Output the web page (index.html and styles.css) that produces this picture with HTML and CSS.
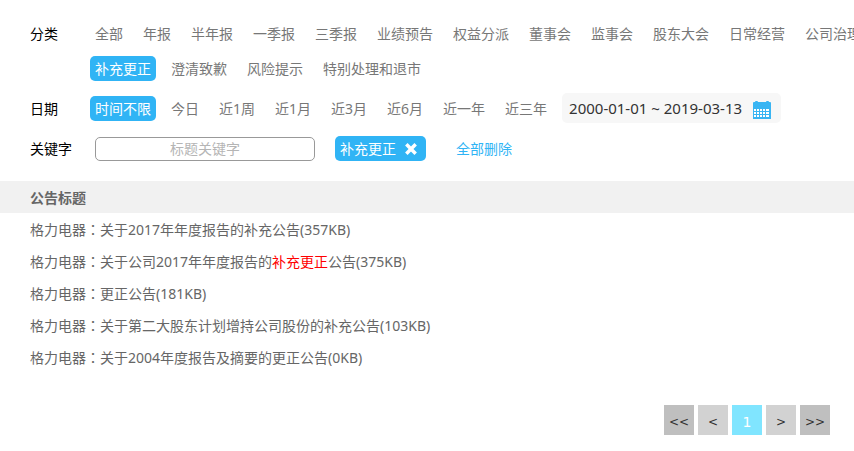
FILE: index.html
```html
<!DOCTYPE html>
<html lang="zh-CN">
<head>
<meta charset="utf-8">
<meta name="viewport" content="width=device-width, initial-scale=1">
<title>公告</title>
<link rel="stylesheet" href="styles.css">
</head>
<body>
<form class="filters">
  <div class="filter" role="group" aria-labelledby="category-label">
    <span class="filter-label" id="category-label">分类</span>
    <div class="options-stack">
      <div class="options">
        <button type="button" class="option">全部</button>
        <button type="button" class="option">年报</button>
        <button type="button" class="option">半年报</button>
        <button type="button" class="option">一季报</button>
        <button type="button" class="option">三季报</button>
        <button type="button" class="option">业绩预告</button>
        <button type="button" class="option">权益分派</button>
        <button type="button" class="option">董事会</button>
        <button type="button" class="option">监事会</button>
        <button type="button" class="option">股东大会</button>
        <button type="button" class="option">日常经营</button>
        <button type="button" class="option">公司治理</button>
      </div>
      <div class="options">
        <button type="button" class="option option-active">补充更正</button>
        <button type="button" class="option">澄清致歉</button>
        <button type="button" class="option">风险提示</button>
        <button type="button" class="option">特别处理和退市</button>
      </div>
    </div>
  </div>

  <div class="filter" role="group" aria-labelledby="date-label">
    <span class="filter-label" id="date-label">日期</span>
    <div class="options">
      <button type="button" class="option option-active">时间不限</button>
      <button type="button" class="option">今日</button>
      <button type="button" class="option">近1周</button>
      <button type="button" class="option">近1月</button>
      <button type="button" class="option">近3月</button>
      <button type="button" class="option">近6月</button>
      <button type="button" class="option">近一年</button>
      <button type="button" class="option">近三年</button>
      <div class="date-range">
        <input class="date-input" type="text" aria-labelledby="date-label" value="2000-01-01 ~ 2019-03-13">
        <button type="button" class="icon-button" aria-label="选择日期">
          <svg class="calendar" viewBox="0 0 18 18" aria-hidden="true">
            <path fill="#39b5f3" d="M0 2q0-1 1-1h1q0-1 1-1h1q1 0 1 1h8q0-1 1-1h1q1 0 1 1h1q1 0 1 1v16H0z"/>
            <path fill="#fff" d="M1 8h2v2H1zM4 8h2v2H4zM7 8h2v2H7zM10 8h2v2h-2zM13 8h3v2h-3zM1 11h2v2H1zM4 11h2v2H4zM7 11h2v2H7zM10 11h2v2h-2zM13 11h3v2h-3zM1 14h2v2H1zM4 14h2v2H4zM7 14h2v2H7zM10 14h2v2h-2zM13 14h3v2h-3z"/>
          </svg>
        </button>
      </div>
    </div>
  </div>

  <div class="filter">
    <label class="filter-label" for="keyword">关键字</label>
    <div class="keywords">
      <input class="keyword-input" id="keyword" type="text" placeholder="标题关键字">
      <span class="tag">补充更正
        <button type="button" class="icon-button" aria-label="移除">
          <svg class="cross" viewBox="0 0 12 12" aria-hidden="true"><path d="M2 2l8 8M10 2l-8 8" stroke="#fff" stroke-width="3" fill="none"/></svg>
        </button>
      </span>
      <button type="button" class="clear">全部删除</button>
    </div>
  </div>
</form>

<table class="notices">
  <thead>
    <tr><th scope="col">公告标题</th></tr>
  </thead>
  <tbody>
    <tr><td><a href="#">格力电器<span lang="zh-TW" class="colon">：</span>关于2017年年度报告的补充公告(357KB)</a></td></tr>
    <tr><td><a href="#">格力电器<span lang="zh-TW" class="colon">：</span>关于公司2017年年度报告的<em>补充更正</em>公告(375KB)</a></td></tr>
    <tr><td><a href="#">格力电器<span lang="zh-TW" class="colon">：</span>更正公告(181KB)</a></td></tr>
    <tr><td><a href="#">格力电器<span lang="zh-TW" class="colon">：</span>关于第二大股东计划增持公司股份的补充公告(103KB)</a></td></tr>
    <tr><td><a href="#">格力电器<span lang="zh-TW" class="colon">：</span>关于2004年度报告及摘要的更正公告(0KB)</a></td></tr>
  </tbody>
</table>

<nav class="pager" aria-label="分页">
  <button type="button" class="page page-end">&lt;&lt;</button>
  <button type="button" class="page">&lt;</button>
  <button type="button" class="page page-current" aria-current="page">1</button>
  <button type="button" class="page">&gt;</button>
  <button type="button" class="page page-end">&gt;&gt;</button>
</nav>
</body>
</html>
```
FILE: styles.css
```css
* {
  box-sizing: border-box;
}

body {
  margin: 0;
  overflow-x: hidden;
  background: #fff;
  color: #666;
  font: 14px/25px "Noto Sans", "Noto Sans CJK SC", sans-serif;
}

button,
input {
  margin: 0;
  padding: 0;
  border: 0;
  background: none;
  color: inherit;
  font: inherit;
}

.filters {
  display: flex;
  flex-direction: column;
  gap: 12px;
  padding: 21px 0 20px 30px;
}

.filter {
  display: flex;
}

.filter:last-child {
  padding-top: 1px;
}

.filter-label {
  flex: 0 0 60px;
  align-self: center;
  color: #000;
}

.filter:first-child .filter-label {
  align-self: flex-start;
}

.options-stack {
  display: flex;
  flex-direction: column;
  gap: 10px;
}

.options {
  display: flex;
  align-items: center;
  gap: 10px;
}

.option {
  flex: none;
  height: 25px;
  padding: 0 5px;
  border-radius: 5px;
  color: #777;
  white-space: nowrap;
}

.option-active {
  background: #30b4f5;
  color: #fff;
}

.date-range {
  display: flex;
  flex: none;
  align-items: center;
  height: 30px;
  padding: 0 10px 0 7px;
  border-radius: 5px;
  background: #f7f7f7;
  color: #333;
}

.date-input {
  width: 184px;
  font-size: 15px;
}

.icon-button {
  display: flex;
}

.calendar {
  width: 18px;
  height: 18px;
  margin-top: 4px;
}

.keywords {
  display: flex;
  align-items: center;
  padding-left: 5px;
}

.keyword-input {
  width: 220px;
  height: 24px;
  margin-right: 20px;
  border: 1px solid #999;
  border-radius: 5px;
  text-align: center;
}

.keyword-input::placeholder {
  color: #b5b5b5;
}

.tag {
  display: flex;
  align-items: center;
  gap: 8px;
  height: 25px;
  margin-right: 30px;
  padding: 0 8px 0 5px;
  border-radius: 5px;
  background: #30b4f5;
  color: #fff;
}

.cross {
  width: 14px;
  height: 14px;
}

.clear {
  color: #30b4f5;
}

.notices {
  width: 100%;
  border-collapse: collapse;
}

.notices th,
.notices td {
  height: 32px;
  padding: 0 30px;
  text-align: left;
}

.notices th {
  background: #f1f1f1;
}

.notices a {
  color: inherit;
  text-decoration: none;
}

.notices em {
  color: #f00;
  font-style: normal;
}

.colon {
  font-family: "Noto Sans CJK TC", sans-serif;
}

.pager {
  display: flex;
  justify-content: flex-end;
  gap: 4px;
  padding: 32px 24px 16px;
}

.page {
  width: 30px;
  height: 30px;
  padding-top: 3px;
  background: #d2d2d2;
  color: #333;
  font: 12px "DejaVu Sans", sans-serif;
}

.page-end {
  background: #bfbfbf;
}

.page-current {
  background: #80e5ff;
  color: #fff;
  font-size: 14px;
}
```
